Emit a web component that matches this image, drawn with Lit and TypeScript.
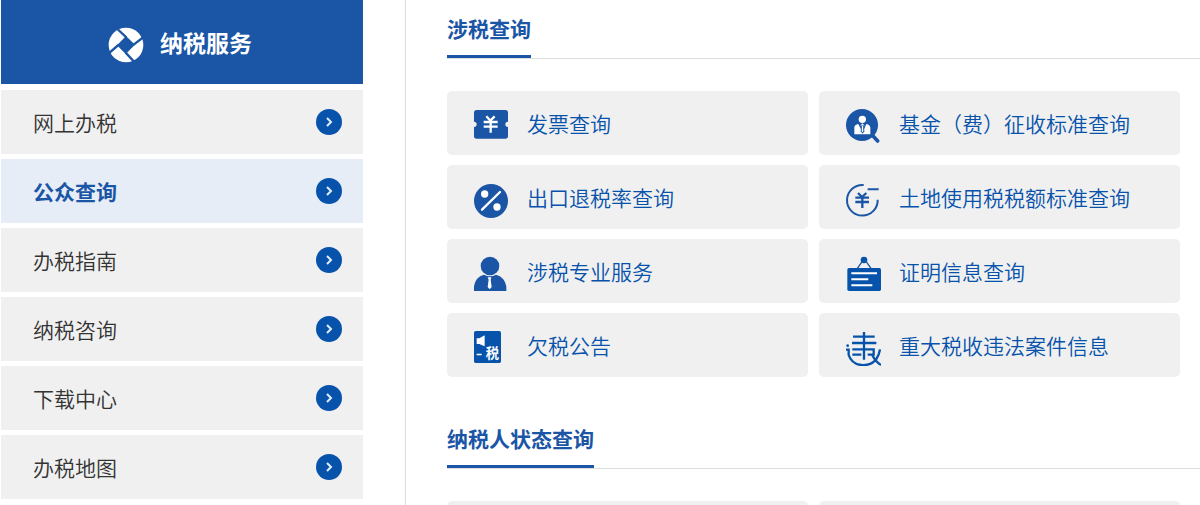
import { LitElement, html, svg, css } from "lit";
import { customElement } from "lit/decorators.js";
import { classMap } from "lit/directives/class-map.js";

const BLUE = "#1a55a6";
const DEEP = "#0753ac";

const menu = [
  { label: "网上办税", active: false },
  { label: "公众查询", active: true },
  { label: "办税指南", active: false },
  { label: "纳税咨询", active: false },
  { label: "下载中心", active: false },
  { label: "办税地图", active: false },
];

const icons = {
  ticket: {
    box: "24 24 108 108",
    art: svg`<path fill=${BLUE} d="M35 30H121Q129 30 129 38V65A8 8 0 0 0 129 81V108Q129 116 121 116H35Q27 116 27 108V81A8 8 0 0 0 27 65V38Q27 30 35 30Z"/>
      <path fill="none" stroke="#fff" stroke-width="7" d="M64 49L76 62L89 49M56 66H98M56 80H98M77 62V98"/>`,
  },
  fund: {
    box: "30 24 108 108",
    art: svg`<path stroke=${BLUE} stroke-width="11" stroke-linecap="round" d="M112 106L128 123"/>
      <circle cx="81" cy="75" r="48" fill=${BLUE}/>
      <circle cx="82" cy="58" r="11" fill="#fff"/>
      <path fill="#fff" d="M58 103V83Q58 74 70 72L81 94L77 76L82 70L88 76L85 94L94 72Q105 74 106 83V103Z"/>
      <path fill=${BLUE} d="M79 76H86L88 94L83 101L77 94Z"/>
      <path fill="#fff" d="M81 77H84L85 94L83 97L80 94Z"/>`,
  },
  percent: {
    box: "24 21 108 108",
    art: svg`<circle cx="78" cy="78" r="51" fill=${BLUE}/>
      <circle cx="59" cy="57" r="11" fill="#fff"/><circle cx="96" cy="96" r="11" fill="#fff"/>
      <path stroke="#fff" stroke-width="7" stroke-linecap="round" d="M51 104L105 51"/>`,
  },
  land: {
    box: "30 21 108 108",
    art: svg`<path fill="none" stroke=${BLUE} stroke-width="6" d="M86 30A46 46 0 1 0 128 74M98 43H131"/>
      <path fill="none" stroke=${BLUE} stroke-width="7" d="M69 54L81 66L94 54M61 68H102M61 81H102M82 66V99"/>`,
  },
  person: {
    box: "24 21 108 108",
    art: svg`<circle cx="75" cy="51" r="28" fill=${BLUE}/>
      <path fill=${BLUE} d="M27 126V112Q31 84 57 77Q75 86 93 77Q119 84 124 112V126Z"/>
      <path fill="#fff" d="M68 85H79L77 92L80 114L74 121L68 114L71 92Z"/>`,
  },
  board: {
    box: "30 21 108 108",
    art: svg`<circle cx="87" cy="33" r="10" fill=${DEEP}/>
      <path fill="none" stroke=${BLUE} stroke-width="4" d="M67 58L82 37M93 37L108 58"/>
      <rect x="37" y="57" width="101" height="69" rx="5" fill=${DEEP}/>
      <path stroke="#fff" stroke-width="6" d="M49 73H126M49 91H100M49 109H112"/>`,
  },
  notice: {
    box: "24 27 108 108",
    art: svg`<rect x="27" y="30" width="81" height="96" rx="5" fill=${DEEP}/>
      <path fill="#fff" d="M35 52H43L59 43V76L43 69H35ZM35 98H50V103H35Z"/>
      <text x="62" y="112" fill="#fff" font-size="40" font-weight="700">税</text>`,
  },
  violate: {
    box: "30 24 108 108",
    art: svg`<path fill="none" stroke=${DEEP} stroke-width="7" d="M54 44H119M51 63H124M52 82H116V98H98M87 30V113M52 98H79"/>
      <path fill="none" stroke=${DEEP} stroke-width="7" d="M33 83H41V99Q50 126 78 129Q108 132 124 111Q133 97 135 82M112 100Q122 120 138 129"/>
      <circle cx="38" cy="71" r="4" fill=${DEEP}/>`,
  },
};

type IconName = keyof typeof icons;

const taxQueries: { icon: IconName; label: string }[] = [
  { icon: "ticket", label: "发票查询" },
  { icon: "fund", label: "基金（费）征收标准查询" },
  { icon: "percent", label: "出口退税率查询" },
  { icon: "land", label: "土地使用税税额标准查询" },
  { icon: "person", label: "涉税专业服务" },
  { icon: "board", label: "证明信息查询" },
  { icon: "notice", label: "欠税公告" },
  { icon: "violate", label: "重大税收违法案件信息" },
];

@customElement("app-root")
export class AppRoot extends LitElement {
  static styles = css`
    :host {
      display: flex;
      height: 100vh;
      overflow: hidden;
      background: #fff;
      color: #333;
      font-family: "Noto Sans CJK SC", sans-serif;
      font-size: 21px;
      line-height: 32px;
    }
    * {
      box-sizing: border-box;
    }
    a {
      color: inherit;
      text-decoration: none;
    }
    svg {
      display: block;
      flex: none;
    }
    .side {
      flex: 0 0 405px;
      padding: 0 42px 0 1px;
    }
    .title {
      display: flex;
      align-items: center;
      justify-content: center;
      gap: 16px;
      height: 84px;
      margin: 0 0 6px;
      padding: 5px 4px 0 0;
      background: #1a55a6;
      color: #fff;
      font-size: 23px;
      font-weight: 700;
    }
    .title span {
      padding-bottom: 6px;
    }
    .menu {
      display: grid;
      gap: 5px;
      margin: 0;
      padding: 0;
      list-style: none;
    }
    .item {
      display: flex;
      align-items: center;
      justify-content: space-between;
      height: 64px;
      padding: 0 21px 0 32px;
      background: #f0f0f0;
      font-weight: 350;
    }
    .item.active {
      background: #e6edf6;
      color: #1a55a6;
      font-weight: 700;
    }
    .main {
      flex: 1;
      min-width: 0;
      padding-left: 41px;
      border-left: 1px solid #ddd;
    }
    .heading {
      display: flex;
      height: 59px;
      margin: 0 0 32px;
      border-bottom: 1px solid #ddd;
      color: #1a55a6;
      font-size: 21px;
      font-weight: 700;
    }
    .tab {
      padding-top: 12px;
      border-bottom: 3px solid #1a55a6;
    }
    .cards {
      display: grid;
      grid-template-columns: 1fr 1fr;
      gap: 10px 11px;
      margin: 0 20px 33px 0;
    }
    .card {
      display: flex;
      align-items: center;
      gap: 18px;
      min-height: 64px;
      padding: 0 26px;
      border-radius: 5px;
      background: #f0f0f0;
      color: #0753ac;
      font-weight: 350;
    }
    .card svg {
      margin-top: 6px;
    }
  `;

  render() {
    return html`
      <aside class="side">
        <h2 class="title">
          <svg width="36" height="36" viewBox="25 23 108 108" aria-hidden="true">
            <circle cx="79" cy="77" r="52" fill="#fff" />
            <path fill="#1a55a6" d="M79 50L106 76L78 104L52 78Z" />
            <path fill="none" stroke="#1a55a6" stroke-width="7" d="M53 29L80 54M132 53L102 76M104 128L78 100M25 104L56 77" />
          </svg>
          <span>纳税服务</span>
        </h2>
        <nav>
          <ul class="menu">
            ${menu.map(
              (m) => html`<li>
                <a href="#" class=${classMap({ item: true, active: m.active })}>
                  <span>${m.label}</span>
                  <svg width="26" height="26" viewBox="0 0 26 26" aria-hidden="true">
                    <circle cx="13" cy="13" r="13" fill="#0753ac" />
                    <path d="M11 9L15 13L11 17" fill="none" stroke="#e4edf7" stroke-width="2" />
                  </svg>
                </a>
              </li>`
            )}
          </ul>
        </nav>
      </aside>
      <main class="main">
        <h2 class="heading"><span class="tab">涉税查询</span></h2>
        <div class="cards">
          ${taxQueries.map(
            (q) => html`<a href="#" class="card">
              <svg width="36" height="36" viewBox=${icons[q.icon].box} aria-hidden="true">${icons[q.icon].art}</svg>
              <span>${q.label}</span>
            </a>`
          )}
        </div>
        <h2 class="heading"><span class="tab">纳税人状态查询</span></h2>
        <div class="cards">
          <div class="card"></div>
          <div class="card"></div>
        </div>
      </main>
    `;
  }
}
